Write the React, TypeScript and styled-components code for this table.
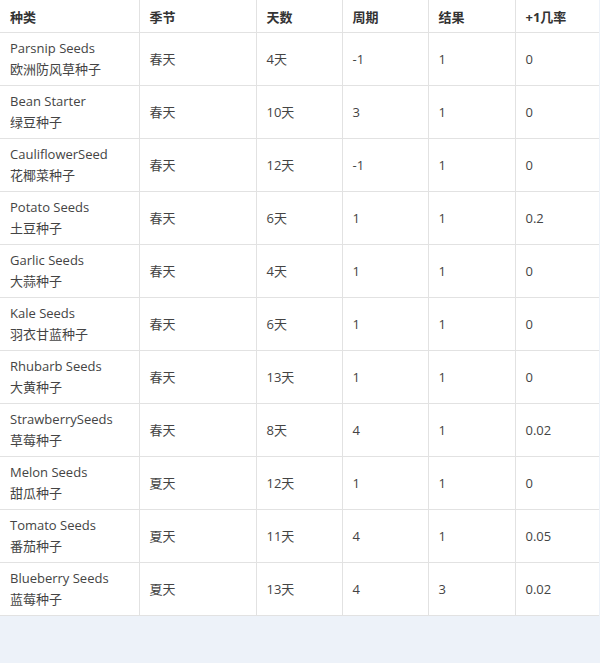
import React from "react";
import styled, { createGlobalStyle } from "styled-components";

const Global = createGlobalStyle`
  html, body { margin: 0; padding: 0; background: #edf2f9; }
  body { font-family: "Open Sans", "Noto Sans CJK SC", sans-serif; }
`;

const Page = styled.div`
  width: 600px;
  height: 663px;
  background: #edf2f9;
`;

const Table = styled.table`
  width: 599px;
  border-collapse: collapse;
  table-layout: fixed;
  background: #fff;
  color: #444;
  font-size: 13px;
`;

const HeadCell = styled.th`
  height: 32px;
  padding: 0 10px;
  text-align: left;
  font-weight: 700;
  color: #333;
  border: 1px solid #e2e2e2;
  border-top: none;
  &:first-child { border-left: none; }
  &:last-child { border-right: none; }
`;

const Cell = styled.td`
  height: 52px;
  padding: 0 10px;
  text-align: left;
  vertical-align: middle;
  line-height: 21px;
  border: 1px solid #e2e2e2;
  &:first-child { border-left: none; }
  &:last-child { border-right: none; }
`;

const Name = styled.div`
  display: flex;
  flex-direction: column;
`;

const widths = [139, 117, 86, 86, 87, 84];
const heads = ["种类", "季节", "天数", "周期", "结果", "+1几率"];

const rows: [string, string, string, string, string, string, string][] = [
  ["Parsnip Seeds", "欧洲防风草种子", "春天", "4天", "-1", "1", "0"],
  ["Bean Starter", "绿豆种子", "春天", "10天", "3", "1", "0"],
  ["CauliflowerSeed", "花椰菜种子", "春天", "12天", "-1", "1", "0"],
  ["Potato Seeds", "土豆种子", "春天", "6天", "1", "1", "0.2"],
  ["Garlic Seeds", "大蒜种子", "春天", "4天", "1", "1", "0"],
  ["Kale Seeds", "羽衣甘蓝种子", "春天", "6天", "1", "1", "0"],
  ["Rhubarb Seeds", "大黄种子", "春天", "13天", "1", "1", "0"],
  ["StrawberrySeeds", "草莓种子", "春天", "8天", "4", "1", "0.02"],
  ["Melon Seeds", "甜瓜种子", "夏天", "12天", "1", "1", "0"],
  ["Tomato Seeds", "番茄种子", "夏天", "11天", "4", "1", "0.05"],
  ["Blueberry Seeds", "蓝莓种子", "夏天", "13天", "4", "3", "0.02"],
];

export default function App() {
  return (
    <Page>
      <Global />
      <Table>
        <colgroup>
          {widths.map((w, i) => (
            <col key={i} style={{ width: w }} />
          ))}
        </colgroup>
        <thead>
          <tr>
            {heads.map((h) => (
              <HeadCell key={h}>{h}</HeadCell>
            ))}
          </tr>
        </thead>
        <tbody>
          {rows.map((r) => (
            <tr key={r[0]}>
              <Cell>
                <Name>
                  <span>{r[0]}</span>
                  <span>{r[1]}</span>
                </Name>
              </Cell>
              <Cell>{r[2]}</Cell>
              <Cell>{r[3]}</Cell>
              <Cell>{r[4]}</Cell>
              <Cell>{r[5]}</Cell>
              <Cell>{r[6]}</Cell>
            </tr>
          ))}
        </tbody>
      </Table>
    </Page>
  );
}
